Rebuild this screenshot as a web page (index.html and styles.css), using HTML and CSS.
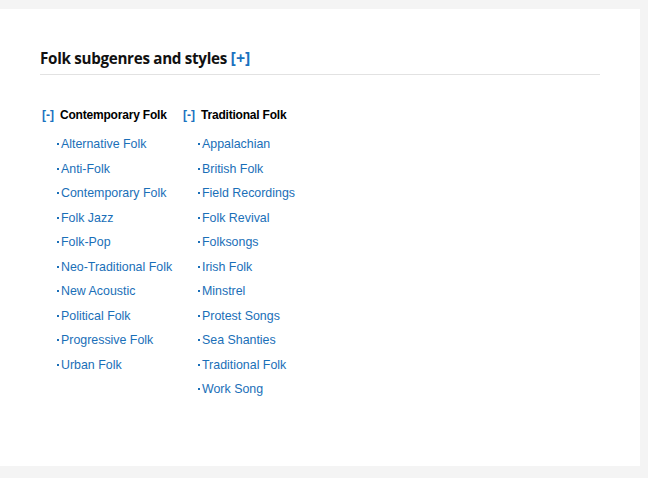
FILE: index.html
```html
<!DOCTYPE html>
<html>
<head>
<meta charset="utf-8">
<link rel="stylesheet" href="styles.css">
</head>
<body>
<div class="panel">
  <h2 class="title">Folk subgenres and styles <span class="toggle">[+]</span></h2>
  <div class="cols">
    <div class="col">
      <div class="col-head"><span class="mini">[-]</span>Contemporary Folk</div>
      <ul class="list">
        <li><a>Alternative Folk</a></li>
        <li><a>Anti-Folk</a></li>
        <li><a>Contemporary Folk</a></li>
        <li><a>Folk Jazz</a></li>
        <li><a>Folk-Pop</a></li>
        <li><a>Neo-Traditional Folk</a></li>
        <li><a>New Acoustic</a></li>
        <li><a>Political Folk</a></li>
        <li><a>Progressive Folk</a></li>
        <li><a>Urban Folk</a></li>
      </ul>
    </div>
    <div class="col">
      <div class="col-head"><span class="mini">[-]</span>Traditional Folk</div>
      <ul class="list">
        <li><a>Appalachian</a></li>
        <li><a>British Folk</a></li>
        <li><a>Field Recordings</a></li>
        <li><a>Folk Revival</a></li>
        <li><a>Folksongs</a></li>
        <li><a>Irish Folk</a></li>
        <li><a>Minstrel</a></li>
        <li><a>Protest Songs</a></li>
        <li><a>Sea Shanties</a></li>
        <li><a>Traditional Folk</a></li>
        <li><a>Work Song</a></li>
      </ul>
    </div>
  </div>
</div>
</body>
</html>
```

FILE: styles.css
```css
html, body {
  margin: 0;
  padding: 0;
  background: #f4f4f4;
}
body {
  padding-top: 9px;
  font-family: "Liberation Sans", Arial, sans-serif;
}
.panel {
  width: 560px;
  height: 418px;
  background: #fff;
  padding: 39px 40px 0 40px;
}
.title {
  margin: 0;
  font-family: "Open Sans", "Noto Sans", sans-serif;
  font-weight: 700;
  font-size: 15.2px;
  line-height: 20px;
  letter-spacing: -0.3px;
  color: #111;
  padding-bottom: 6px;
  border-bottom: 1px solid #e2e2e2;
}
.toggle {
  color: #1a72bf;
  font-weight: 700;
  font-size: 16px;
  letter-spacing: 0;
}
.cols {
  display: flex;
  padding-top: 33px;
  padding-left: 2px;
}
.col {
  width: 141px;
}
.col-head {
  font-size: 12px;
  line-height: 14px;
  font-weight: 700;
  letter-spacing: -0.2px;
  color: #000;
}
.mini {
  color: #1a72bf;
  margin-right: 6px;
  letter-spacing: 0;
}
.list {
  list-style: none;
  margin: 10px 0 0 0;
  padding: 0 0 0 15px;
}
.list li {
  font-size: 12.4px;
  line-height: 24.5px;
  color: #1a6fb8;
}
.list li::before {
  content: "";
  display: inline-block;
  width: 2px;
  height: 2px;
  background: #1a6fb8;
  margin-right: 2px;
  vertical-align: 3px;
}
.list a {
  color: #1a6fb8;
}
```
